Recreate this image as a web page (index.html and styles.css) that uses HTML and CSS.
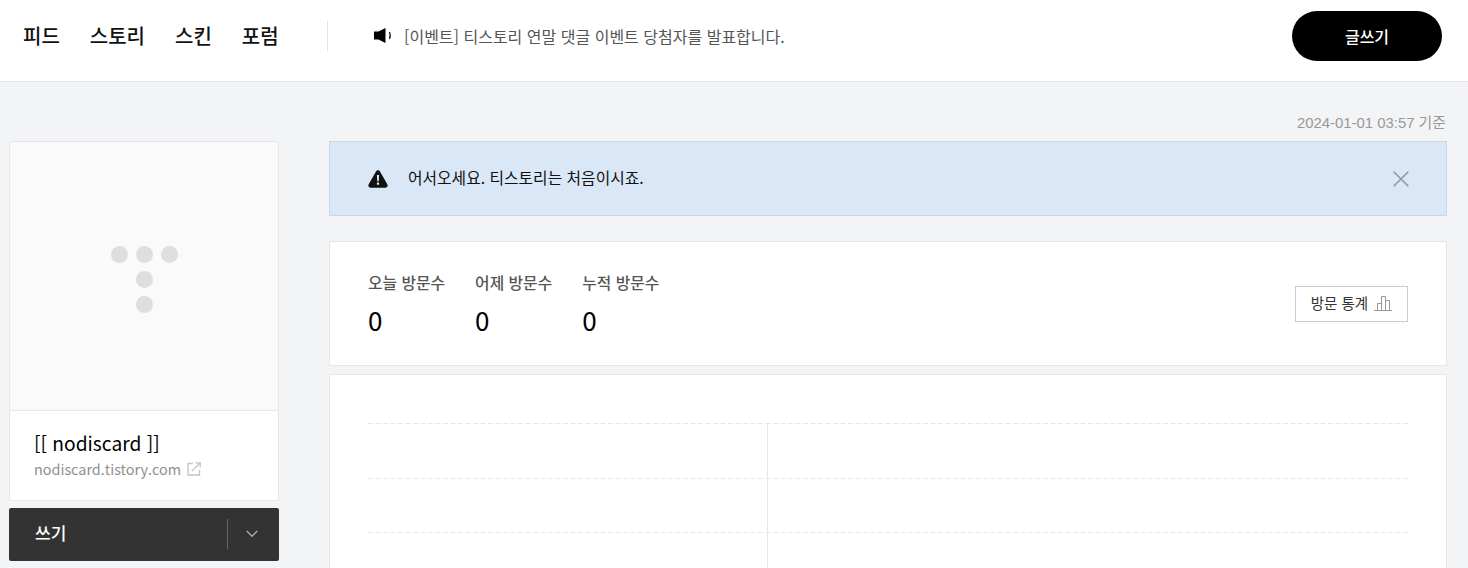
FILE: index.html
```html
<!DOCTYPE html>
<html lang="ko">
<head>
  <meta charset="UTF-8" />
  <meta name="viewport" content="width=device-width, initial-scale=1" />
  <title>티스토리 관리</title>
  <link rel="stylesheet" href="styles.css">
</head>
<body>
  <header class="header">
    <nav class="gnb">
      <a class="gnb-item">피드</a>
      <a class="gnb-item">스토리</a>
      <a class="gnb-item">스킨</a>
      <a class="gnb-item">포럼</a>
    </nav>
    <div class="notice">
      <svg class="notice-icon" width="19" height="17" viewBox="0 0 19 17">
        <path d="M1 4.500h4.500L12.500 1v15l-7-3.500H1z" fill="#000" />
        <path d="M16.500 5q1.500 3.500 0 7" fill="none" stroke="#222" stroke-width="1.400" />
      </svg>
      <span>[이벤트] 티스토리 연말 댓글 이벤트 당첨자를 발표합니다.</span>
    </div>
    <button class="btn-write">글쓰기</button>
  </header>

  <div class="content">
    <p class="timestamp">2024-01-01 03:57 기준</p>
    <div class="columns">
      <aside class="side">
        <div class="blog-card">
          <div class="blog-thumb">
            <div class="logo-dots">
              <i></i><i></i><i></i>
              <i class="dot-mid"></i>
              <i class="dot-mid"></i>
            </div>
          </div>
          <div class="blog-info">
            <div class="blog-name">[[ nodiscard ]]</div>
            <div class="blog-url">
              <span>nodiscard.tistory.com</span>
              <svg width="14" height="14" viewBox="0 0 14 14" fill="none" stroke="#c4c4c4" stroke-width="1.300">
                <path d="M6 1.500H1v11.500h11.500V8" />
                <path d="M4.800 9.200L13 1M8.500 .8h4.700v4.700" />
              </svg>
            </div>
          </div>
        </div>
        <div class="write-bar">
          <span class="write-label">쓰기</span>
          <span class="write-more">
            <svg width="12" height="8" viewBox="0 0 12 8" fill="none" stroke="#aaa" stroke-width="1.400">
              <path d="M.8 1l5.200 5.200L11.200 1" />
            </svg>
          </span>
        </div>
      </aside>

      <main class="main">
        <div class="alert">
          <svg class="alert-icon" width="20" height="18" viewBox="0 0 20 18">
            <path d="M10 .3c.9 0 1.600.5 2 1.200l7.300 12.800c1 1.700-.1 3.400-1.900 3.400H2.600C.8 17.700-.3 16 .7 14.300L8 1.500C8.400.8 9.100.3 10 .3z" fill="#111" />
            <path d="M8.900 5h2.200l-.3 6.300H9.200zM8.900 12.500h2.200v2.200H8.900z" fill="#dae7f7" />
          </svg>
          <span class="alert-text">어서오세요. 티스토리는 처음이시죠.</span>
          <svg class="alert-close" width="16" height="16" viewBox="0 0 16 16" fill="none" stroke="#8e969e" stroke-width="1.500">
            <path d="M.7.7l14.600 14.600M15.300.7L.7 15.300" />
          </svg>
        </div>

        <section class="stats">
          <div class="stat">
            <div class="stat-label">오늘 방문수</div>
            <div class="stat-value">0</div>
          </div>
          <div class="stat">
            <div class="stat-label">어제 방문수</div>
            <div class="stat-value">0</div>
          </div>
          <div class="stat">
            <div class="stat-label">누적 방문수</div>
            <div class="stat-value">0</div>
          </div>
          <button class="btn-stats">
            <span class="btn-stats-text">방문 통계</span>
            <svg width="18" height="15" viewBox="0 0 18 15" fill="none" stroke="#999" stroke-width="1">
              <path d="M0 14.500h18M3.500 14V7.500h4V14M7.500 14V.5h4V14M11.500 14V4.500h4V14" />
            </svg>
          </button>
        </section>

        <section class="chart-card">
          <svg class="chart" width="1040" height="145" viewBox="0 0 1040 145">
            <g stroke="#e8e8e8" stroke-dasharray="5 2.500">
              <path d="M0 .5h1040" />
              <path d="M0 55.500h1040" />
              <path d="M0 109.500h1040" />
            </g>
            <path d="M399.500 0v145" stroke="#e8e8e8" />
          </svg>
        </section>
      </main>
    </div>
  </div>
</body>
</html>
```

FILE: styles.css
```css
body {
  margin: 0;
  height: 568px;
  overflow: hidden;
  background: #f3f4f6;
  color: #000;
  font-family: "Noto Sans CJK KR", "Noto Sans", sans-serif;
}

.header {
  height: 71px;
  display: flex;
  align-items: center;
  background: #fff;
  border-bottom: 1px solid #e6e7ea;
  padding: 0 26px 10px 23px;
}

.gnb {
  display: flex;
  gap: 30px;
  width: 304px;
  height: 30px;
  align-items: center;
  border-right: 1px solid #e3e3e3;
}

.gnb-item {
  font-size: 20px;
  font-weight: 500;
  line-height: 30px;
  color: #111;
}

.notice {
  display: flex;
  align-items: center;
  flex: 1;
  margin-left: 45px;
  font-size: 16px;
  color: #555;
}

.notice-icon {
  margin-right: 12px;
}

.btn-write {
  width: 150px;
  height: 50px;
  border: none;
  border-radius: 25px;
  background: #000;
  color: #fff;
  font-family: inherit;
  font-size: 16px;
  font-weight: 500;
}

.content {
  padding: 0 21px 0 9px;
}

.timestamp {
  margin: 0;
  height: 59px;
  padding-right: 1px;
  line-height: 82px;
  text-align: right;
  font-family: "Liberation Sans", "Noto Sans CJK KR", sans-serif;
  font-size: 14.9px;
  color: #999;
}

.columns {
  display: flex;
  gap: 50px;
}

.side {
  width: 270px;
  flex: none;
}

.blog-card {
  border: 1px solid #e6e7ec;
  border-radius: 2px;
  background: #fff;
  height: 358px;
}

.blog-thumb {
  height: 269px;
  background: #fafafa;
  border-bottom: 1px solid #e6e7ec;
  display: flex;
  justify-content: center;
  padding-top: 104px;
  box-sizing: border-box;
}

.logo-dots {
  display: grid;
  grid-template-columns: repeat(3, 17px);
  grid-auto-rows: 17px;
  gap: 8px;
}

.logo-dots i {
  background: #dedede;
  border-radius: 50%;
}

.logo-dots .dot-mid {
  grid-column: 2;
}

.blog-info {
  padding: 18px 24px;
}

.blog-name {
  font-size: 19.2px;
  line-height: 28px;
  color: #000;
}

.blog-url {
  display: flex;
  align-items: center;
  gap: 6px;
  font-size: 14.4px;
  line-height: 24px;
  color: #909090;
}

.write-bar {
  margin-top: 7px;
  height: 53px;
  display: flex;
  align-items: center;
  justify-content: space-between;
  background: #333;
  border-radius: 2px;
  padding-left: 26px;
  box-sizing: border-box;
}

.write-label {
  font-size: 17px;
  font-weight: 500;
  line-height: 24px;
  margin-top: -4px;
  color: #fff;
}

.write-more {
  width: 48px;
  height: 30px;
  display: flex;
  align-items: center;
  justify-content: center;
  padding-right: 3px;
  margin-top: -1px;
  border-left: 1px solid #666;
}

.main {
  flex: 1;
  min-width: 0;
}

.alert {
  height: 75px;
  display: flex;
  align-items: center;
  background: #dae7f7;
  border: 1px solid #c9d7e7;
  box-sizing: border-box;
  padding: 0 38px;
}

.alert-icon {
  margin-right: 20px;
}

.alert-text {
  flex: 1;
  font-size: 15.8px;
  line-height: 22px;
  margin-top: -1px;
  color: #111;
}

.alert-close {
  margin-right: -1px;
}

.stats {
  margin-top: 25px;
  height: 125px;
  box-sizing: border-box;
  display: flex;
  align-items: center;
  gap: 30px;
  background: #fff;
  border: 1px solid #e6e7ec;
  padding: 0 38px;
}

.stat-label {
  font-size: 15.8px;
  font-weight: 500;
  line-height: 22px;
  color: #555;
}

.stat-value {
  margin-top: 11px;
  font-size: 26px;
  line-height: 30px;
  color: #000;
}

.btn-stats {
  margin-left: auto;
  width: 113px;
  height: 36px;
  display: flex;
  align-items: center;
  justify-content: center;
  gap: 6px;
  padding: 0;
  background: #fff;
  border: 1px solid #c5ccd4;
  font-family: inherit;
  font-size: 14.5px;
  color: #333;
}

.btn-stats-text {
  line-height: 20px;
  margin-top: -2px;
}

.chart-card {
  margin-top: 8px;
  height: 300px;
  box-sizing: border-box;
  background: #fff;
  border: 1px solid #e6e7ec;
  padding: 48px 38px 0;
}

.chart {
  display: block;
}
```
